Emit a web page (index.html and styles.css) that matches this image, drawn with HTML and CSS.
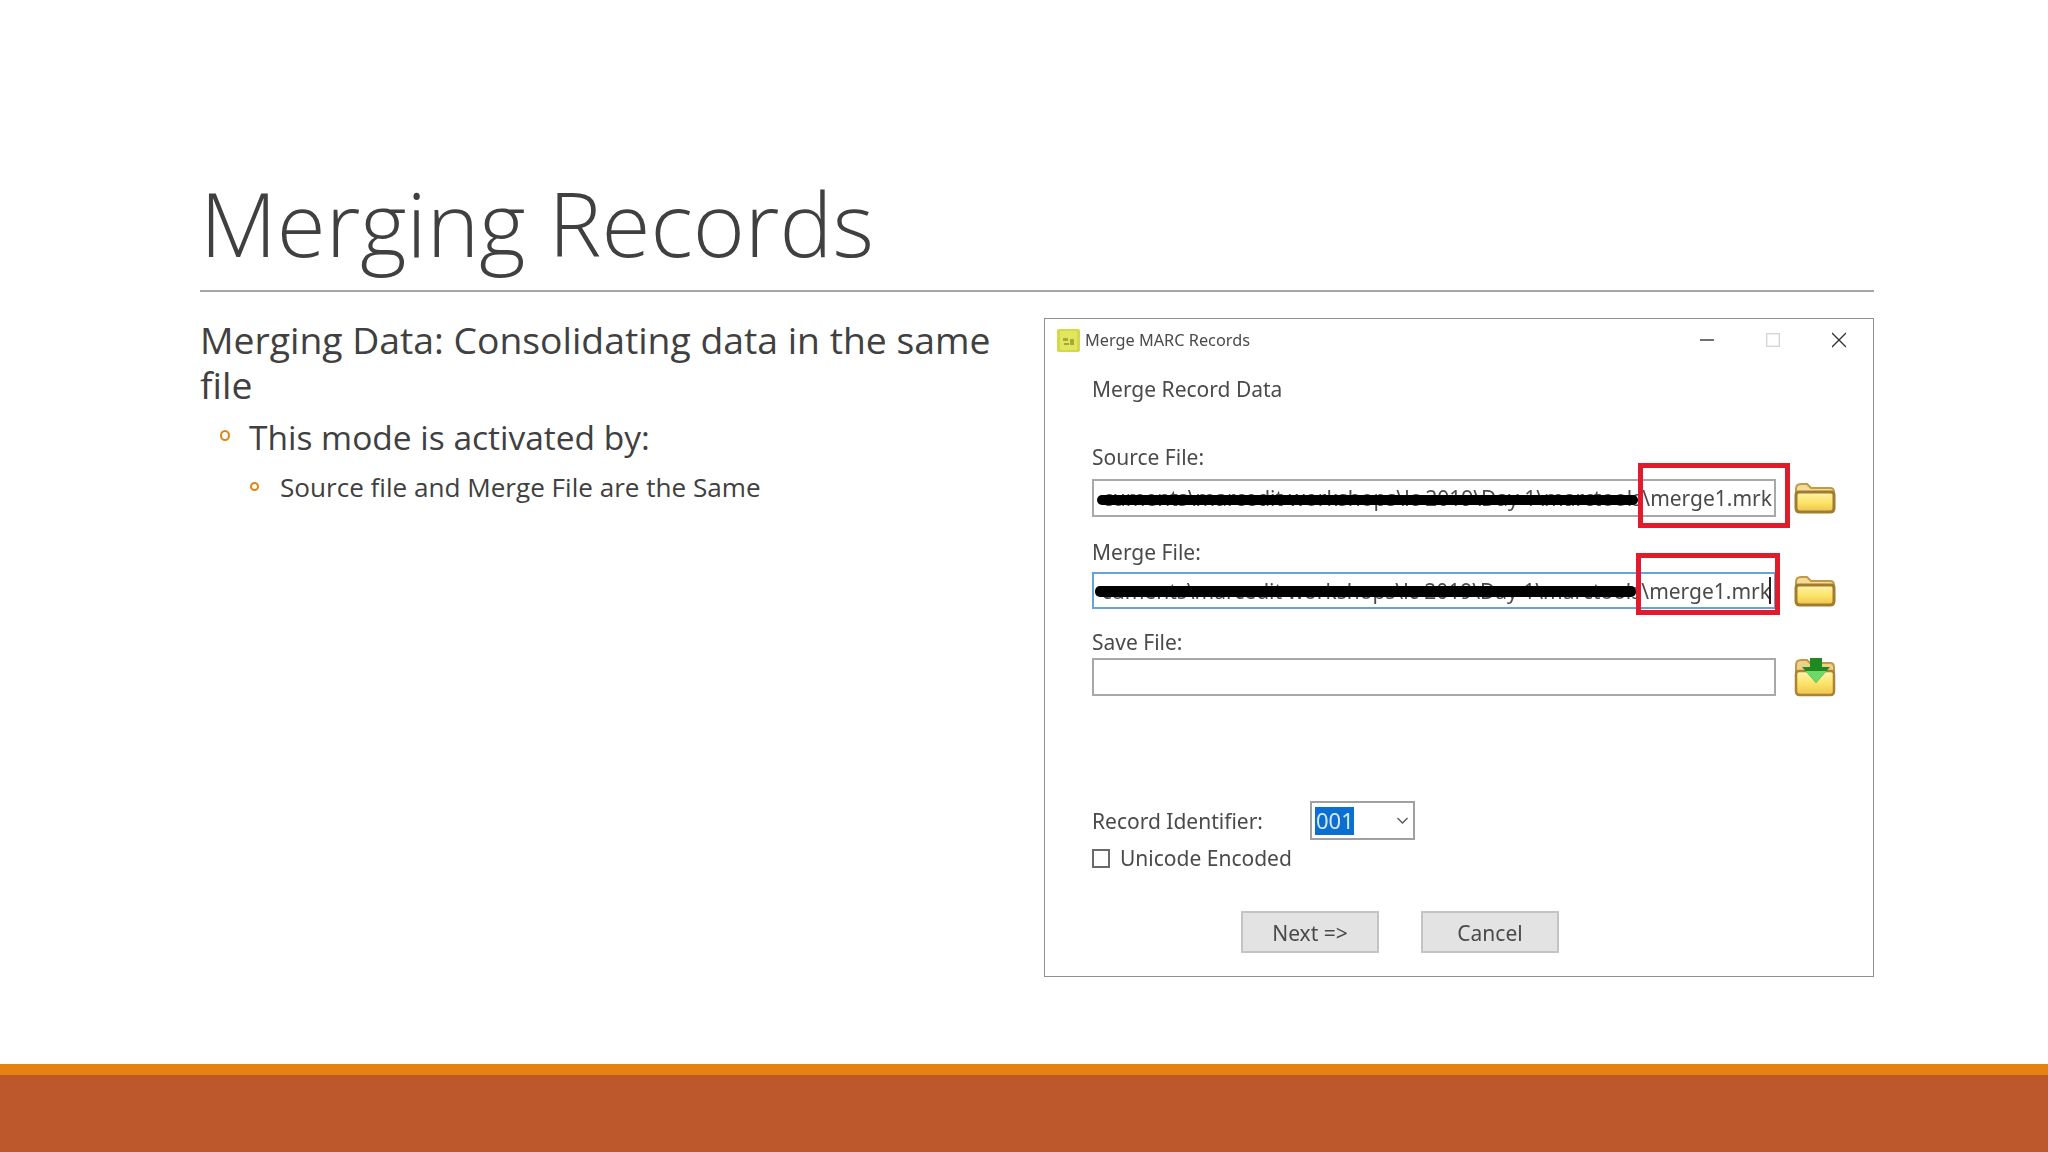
FILE: index.html
```html
<!DOCTYPE html>
<html lang="en">
<head>
<meta charset="utf-8">
<title>Merging Records</title>
<link rel="stylesheet" href="styles.css">
</head>
<body>
<div class="slide">
  <main class="main">
    <h1 class="title">Merging Records</h1>
    <div class="content">
      <section class="points">
        <p class="lvl1">Merging Data: Consolidating data in the same file</p>
        <p class="lvl2"><span class="bullet"></span>This mode is activated by:</p>
        <p class="lvl3"><span class="bullet small"></span>Source file and Merge File are the Same</p>
      </section>
      <section class="dialog">
        <header class="titlebar">
          <svg class="appicon" viewBox="0 0 23 23"><rect width="23" height="23" rx="2" fill="#d3d94a"/><rect x="3" y="2" width="17" height="19" fill="#e2e65c"/><path d="M6 9h5v3H6zM13 10h4v6h-4z" fill="#a6a838"/><path d="M7 15h5" stroke="#8f9130" stroke-width="1.5"/></svg>
          <span class="wintitle">Merge MARC Records</span>
          <div class="winctrls">
            <svg class="ctrl" viewBox="0 0 14 16"><path d="M0 8h14" stroke="#333" stroke-width="1.4"/></svg>
            <svg class="ctrl" viewBox="0 0 14 16"><rect x=".7" y="1.7" width="12.6" height="12.6" fill="none" stroke="#d6d6d6" stroke-width="1.4"/></svg>
            <svg class="ctrl" viewBox="0 0 14 16"><path d="M0 1l14 14M14 1L0 15" stroke="#333" stroke-width="1.3"/></svg>
          </div>
        </header>
        <div class="form">
          <div class="heading">Merge Record Data</div>
          <label class="label source-label">Source File:</label>
          <div class="filerow">
            <div class="field"><span>cuments\marcedit workshops\lc 2019\Day 1\marctools\merge1.mrk</span>
              <i class="scribble"></i><i class="redbox"></i></div>
            <svg class="folder" viewBox="0 0 42 32"><use href="#folder"/></svg>
          </div>
          <label class="label merge-label">Merge File:</label>
          <div class="filerow">
            <div class="field focused"><span>cuments\marcedit workshops\lc 2019\Day 1\marctools\merge1.mrk</span><b class="caret"></b>
              <i class="scribble"></i><i class="redbox"></i></div>
            <svg class="folder" viewBox="0 0 42 32"><use href="#folder"/></svg>
          </div>
          <label class="label save-label">Save File:</label>
          <div class="filerow">
            <div class="field"></div>
            <svg class="folder save" viewBox="0 0 42 40">
              <path d="M2 34V8q0-5 5-5h6l3 3h20q4 0 4 4v24q0 4-4 4H6q-4 0-4-4z" fill="#eed089" stroke="#c29a45" stroke-width="2"/>
              <path d="M2 34V17q0-3 3-3h32q3 0 3 3v17q0 4-4 4H6q-4 0-4-4z" fill="url(#fg)" stroke="#ab8433" stroke-width="2.500"/>
              <path d="M16 1h12v9h8L22 26 8 10h8z" fill="#1f8a1f"/>
              <path d="M22 26L11.500 14h21z" fill="#6fd86a"/>
            </svg>
          </div>
          <div class="idrow">
            <span class="idlabel">Record Identifier:</span>
            <div class="combo"><span class="selected">001</span>
              <svg class="chev" viewBox="0 0 12 8"><path d="M1 1l5 5 5-5" fill="none" stroke="#555" stroke-width="1.3"/></svg></div>
          </div>
          <div class="checkrow"><span class="check"></span><span>Unicode Encoded</span></div>
          <div class="buttons"><span class="btn">Next =&gt;</span><span class="btn">Cancel</span></div>
        </div>
      </section>
    </div>
  </main>
  <footer class="band"></footer>
</div>
<svg class="defs" width="0" height="0">
  <defs>
    <linearGradient id="fg" x1="0" y1="0" x2="0" y2="1"><stop offset="0" stop-color="#fff4b0"/><stop offset=".55" stop-color="#fbe265"/><stop offset="1" stop-color="#eec250"/></linearGradient>
    <g id="folder">
      <path d="M2 26V7q0-5 5-5h6l4 4h19q4 0 4 4v16q0 4-4 4H6q-4 0-4-4z" fill="#f3dc9a" stroke="#c29a45" stroke-width="2"/>
      <path d="M2 26V13q0-3 3-3h32q3 0 3 3v13q0 4-4 4H6q-4 0-4-4z" fill="url(#fg)" stroke="#a27c2e" stroke-width="3"/>
    </g>
  </defs>
</svg>
</body>
</html>
```
FILE: styles.css
```css
* { box-sizing: border-box; }
html, body { margin: 0; padding: 0; background: #fff; }
.slide {
  width: 2048px;
  height: 1152px;
  display: flex;
  flex-direction: column;
  font-family: "Open Sans", Lato, sans-serif;
  color: #404040;
  overflow: hidden;
}
.main { flex: 1; padding: 0 174px 0 200px; }
.title {
  margin: 0;
  height: 292px;
  padding: 163px 0 0 0;
  font-size: 89px;
  line-height: 120px;
  font-weight: 300;
  border-bottom: 2px solid #a6a6a6;
  white-space: nowrap;
}
.content { display: flex; justify-content: space-between; align-items: flex-start; }
.points { width: 800px; padding-top: 25px; }
.points p { margin: 0; }
.lvl1 { font-size: 37.3px; line-height: 45px; }
.lvl2 { font-size: 33.5px; line-height: 44px; margin-top: 8px !important; padding-left: 49px; position: relative; }
.lvl3 { font-size: 26.100px; line-height: 36px; margin-top: 10px !important; padding-left: 80px; position: relative; }
.bullet {
  position: absolute;
  left: 20px;
  top: 15px;
  width: 10px;
  height: 11px;
  border: 2px solid #e48312;
  border-radius: 50%;
}
.bullet.small { left: 50px; top: 13px; width: 9px; height: 9px; }
.dialog {
  width: 830px;
  height: 659px;
  margin-top: 26px;
  border: 1px solid #8f8f8f;
  background: #fff;
  font-family: "Noto Sans", sans-serif;
  color: #4a4a4a;
  flex: none;
  filter: blur(.4px);
}
.titlebar { height: 42px; display: flex; align-items: center; padding-left: 12px; }
.appicon { width: 23px; height: 23px; flex: none; }
.wintitle { font-size: 16.3px; margin-left: 5px; }
.winctrls { margin-left: auto; margin-right: 27px; display: flex; gap: 52px; }
.ctrl { width: 14px; height: 16px; }
.form { padding: 16px 0 0 47px; font-size: 21px; }
.heading, .label { display: block; line-height: 24px; }
.source-label { margin-top: 44px; }
.merge-label { margin-top: 23px; }
.save-label { margin-top: 21px; }
.filerow { display: flex; align-items: center; gap: 18px; margin-top: 10px; }
.merge-label + .filerow { margin-top: 8px; }
.save-label + .filerow { margin-top: 3px; }
.field {
  position: relative;
  width: 684px;
  height: 38px;
  border: 2px solid #a8a8a8;
  display: flex;
  justify-content: flex-end;
  align-items: center;
  padding-right: 2px;
  font-size: 21px;
  white-space: nowrap;
  background: #fff;
}
.field.focused { border-color: #66a3d8; height: 37px; padding-right: 3px; }
.caret { position: absolute; right: 3px; top: 3px; bottom: 3px; width: 2px; background: #222; }
.scribble {
  position: absolute;
  left: 3px;
  width: 541px;
  top: 14px;
  height: 10px;
  background: #000;
  border-radius: 5px;
}
.redbox {
  position: absolute;
  left: 544px;
  top: -18px;
  width: 152px;
  height: 65px;
  border: 5px solid #e01b2b;
}
.focused .scribble { left: 1px; top: 12px; height: 11px; }
.focused .redbox { left: 542px; top: -21px; width: 144px; height: 62px; }
.folder { width: 42px; height: 32px; flex: none; }
.folder.save { height: 40px; }
.idrow { display: flex; align-items: center; margin-top: 104px; height: 39px; }
.idlabel { width: 218px; }
.combo {
  width: 105px;
  height: 39px;
  border: 2px solid #a0a0a0;
  display: flex;
  align-items: center;
  justify-content: space-between;
  padding: 0 4px 0 3px;
}
.selected { background: #0a6fd1; color: #d8e8f8; width: 39px; height: 28px; line-height: 26px; padding-left: 1px; font-size: 22px; }
.chev { width: 13px; height: 8px; }
.checkrow { display: flex; align-items: center; gap: 10px; margin-top: 8px; height: 20px; }
.check { width: 18px; height: 19px; border: 2px solid #6a6a6a; flex: none; }
.buttons { display: flex; gap: 42px; margin: 43px 0 0 149px; }
.btn {
  width: 138px;
  height: 42px;
  background: #e3e3e3;
  border: 2px solid #c4c4c4;
  display: flex;
  align-items: center;
  justify-content: center;
  padding-top: 1px;
}
.band { height: 88px; flex: none; background: #bd582c; border-top: 11px solid #e48312; }
.defs { position: absolute; }
```
